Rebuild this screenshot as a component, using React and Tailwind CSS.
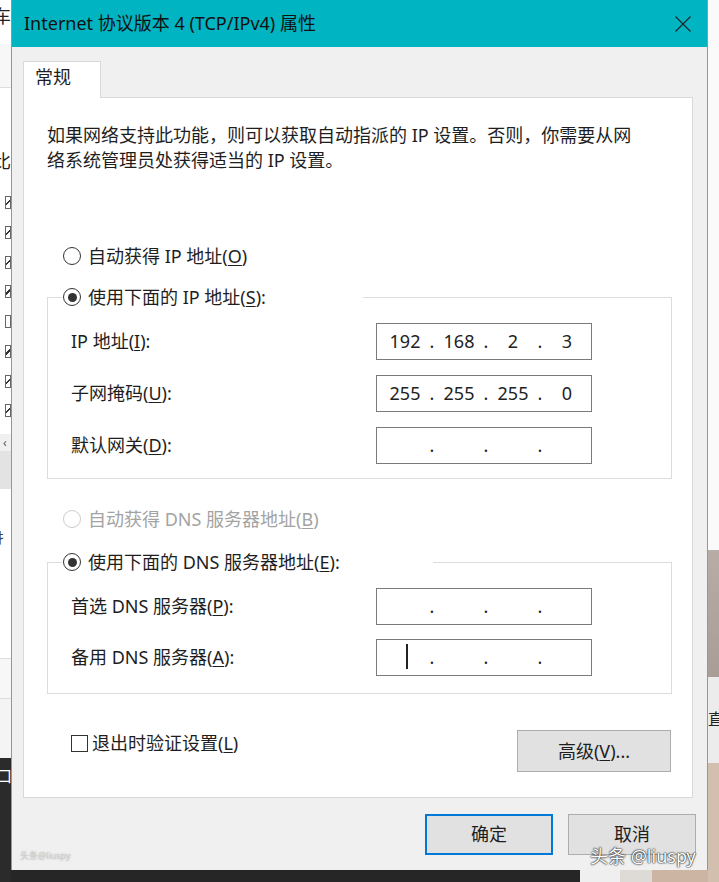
import React from "react";

function Radio({ checked, disabled }) {
  return (
    <span
      className={`flex h-[18px] w-[18px] shrink-0 items-center justify-center rounded-full border bg-white ${
        disabled ? "border-[#cccccc]" : "border-[#333333]"
      }`}
    >
      {checked && <span className="h-[9px] w-[9px] rounded-full bg-[#333333]" />}
    </span>
  );
}

function IpField({ parts = ["", "", "", ""], cursor = false }) {
  return (
    <div className="relative flex h-[37px] w-[216px] items-center border border-[#7a7a7a] bg-white pl-[4px] text-[18px] text-[#222]">
      {parts.map((p, i) => (
        <React.Fragment key={i}>
          <span className="w-[48px] text-center">{p}</span>
          {i < 3 && <span className="w-[6px] text-center">.</span>}
        </React.Fragment>
      ))}
      {cursor && <span className="absolute left-[29px] top-[4px] h-[25px] w-[2px] bg-[#222]" />}
    </div>
  );
}

function FieldRow({ label, keyChar, after = "):", parts, cursor }) {
  return (
    <div className="flex h-[37px] items-center">
      <span className="w-[305px]">
        {label}(<u className="underline-offset-2">{keyChar}</u>{after}
      </span>
      <IpField parts={parts} cursor={cursor} />
    </div>
  );
}

function LeftStrip() {
  const boxes = [203, 236, 267, 297, 329, 361, 393, 424];
  return (
    <div className="flex h-[882px] w-[11px] shrink-0 flex-col overflow-hidden bg-white">
      <div className="h-[44px] overflow-hidden">
        <span className="-ml-[7px] block pt-[5px] text-[18px] leading-[22px] text-[#222]">车</span>
      </div>
      <div className="h-[44px] border-b border-[#dddddd] bg-[#f7f7f7]" />
      <div className="h-[102px] overflow-hidden">
        <span className="-ml-[7px] block pt-[62px] text-[18px] leading-[22px] text-[#222]">比</span>
      </div>
      <div className="flex h-[245px] flex-col pt-[7px]">
        {boxes.map((b, i) => (
          <div key={b} className="flex h-[31.5px] items-start">
            <span
              className={`ml-[5px] h-[13px] w-[8px] border border-[#666] ${
                i === 4 ? "bg-white" : "bg-[linear-gradient(135deg,transparent_45%,#333_45%,#333_60%,transparent_60%)]"
              }`}
            />
          </div>
        ))}
      </div>
      <div className="flex h-[17px] items-center bg-[#f0f0f0] pl-[3px] text-[12px] leading-none text-[#555]">‹</div>
      <div className="h-[38px] bg-[#e3e3e3]" />
      <div className="h-[170px] overflow-hidden">
        <span className="-ml-[4px] block pt-[40px] text-[14px] leading-[18px] text-[#444]">扌</span>
      </div>
      <div className="h-[40px] border-t border-[#dddddd] bg-[#f7f7f7]" />
      <div className="h-[60px] border-t border-[#dddddd] bg-[#f4f4f4]" />
      <div className="h-[125px] overflow-hidden bg-[#2b2b2b]">
        <span className="-ml-[4px] block pt-[8px] text-[16px] leading-[20px] text-white">口</span>
      </div>
    </div>
  );
}

function RightStrip() {
  return (
    <div className="flex h-[882px] w-[11px] shrink-0 flex-col overflow-hidden">
      <div className="h-[550px] bg-[#fafafa]" />
      <div className="h-[127px] bg-[linear-gradient(180deg,#b7aca6,#a99d97)]" />
      <div className="h-[86px] overflow-hidden bg-[#ececec]">
        <span className="block pt-[32px] text-[16px] leading-[20px] text-[#222]">直</span>
      </div>
      <div className="flex-1 bg-[#d3bfae]" />
    </div>
  );
}

export default function App() {
  return (
    <div className="relative flex h-[882px] w-[719px] overflow-hidden font-['Noto_Sans','Noto_Sans_CJK_SC',sans-serif] text-[18px] text-[#1e1e1e]">
      <LeftStrip />

      <div className="flex w-[697px] shrink-0 flex-col">
        {/* dialog */}
        <div className="flex h-[870px] flex-col border-x border-[#4fb3bd] bg-[#f0f0f0]">
          <div className="flex h-[47px] shrink-0 items-center justify-between bg-[#00b4c2] pl-[12px] pr-[16px]">
            <span className="text-[18px] text-[#111]">Internet 协议版本 4 (TCP/IPv4) 属性</span>
            <svg width="16" height="16" viewBox="0 0 16 16">
              <path d="M0.5 0.5 L15.5 15.5 M15.5 0.5 L0.5 15.5" stroke="#222" strokeWidth="1.1" fill="none" />
            </svg>
          </div>

          <div className="pl-[11px] pt-[14px]">
            <div className="relative z-10 -mb-px flex h-[37px] w-[78px] items-center border border-b-0 border-[#d9d9d9] bg-white pb-[5px] pl-[11px] text-[18px]">
              常规
            </div>
            <div className="flex h-[701px] w-[670px] flex-col border border-[#d9d9d9] bg-white">
              <p className="pl-[23px] pt-[25px] leading-[25px]">
                如果网络支持此功能，则可以获取自动指派的 IP 设置。否则，你需要从网
                <br />
                络系统管理员处获得适当的 IP 设置。
              </p>

              <div className="mt-[71px] flex h-[24px] items-center gap-[7px] pl-[39px]">
                <Radio />
                <span>
                  自动获得 IP 地址(<u className="underline-offset-2">O</u>)
                </span>
              </div>

              <fieldset className="ml-[23px] mt-[17px] w-[625px] border border-[#dcdcdc]">
                <legend className="ml-[14px] flex h-[24px] w-[301px] items-center gap-[7px] pl-[1px]">
                  <Radio checked />
                  <span>
                    使用下面的 IP 地址(<u className="underline-offset-2">S</u>):
                  </span>
                </legend>
                <div className="flex flex-col gap-[15px] pb-[14px] pl-[23px] pt-[14px]">
                  <FieldRow label="IP 地址" keyChar="I" parts={["192", "168", "2", "3"]} />
                  <FieldRow label="子网掩码" keyChar="U" parts={["255", "255", "255", "0"]} />
                  <FieldRow label="默认网关" keyChar="D" />
                </div>
              </fieldset>

              <div className="mt-[28px] flex h-[24px] items-center gap-[7px] pl-[39px] text-[#a3a3a3]">
                <Radio disabled />
                <span>
                  自动获得 DNS 服务器地址(<u className="underline-offset-2">B</u>)
                </span>
              </div>

              <fieldset className="ml-[23px] mt-[19px] w-[625px] border border-[#dcdcdc]">
                <legend className="ml-[14px] flex h-[24px] w-[371px] items-center gap-[7px] pl-[1px]">
                  <Radio checked />
                  <span>
                    使用下面的 DNS 服务器地址(<u className="underline-offset-2">E</u>):
                  </span>
                </legend>
                <div className="flex flex-col gap-[14px] pb-[17px] pl-[23px] pt-[14px]">
                  <FieldRow label="首选 DNS 服务器" keyChar="P" />
                  <FieldRow label="备用 DNS 服务器" keyChar="A" cursor />
                </div>
              </fieldset>

              <div className="mt-[36px] flex items-start justify-between pl-[47px] pr-[21px]">
                <div className="mt-[4px] flex h-[18px] items-center gap-[4px]">
                  <span className="h-[17px] w-[17px] border border-[#333] bg-white" />
                  <span>
                    退出时验证设置(<u className="underline-offset-2">L</u>)
                  </span>
                </div>
                <button className="h-[42px] w-[154px] border border-[#adadad] bg-[#e1e1e1] text-[18px]">
                  高级(<u className="underline-offset-2">V</u>)...
                </button>
              </div>
            </div>
          </div>

          <div className="mt-[16px] flex justify-end gap-[15px] pr-[11px]">
            <button className="h-[41px] w-[128px] border-2 border-[#0078d7] bg-[#e1e1e1] text-[18px]">确定</button>
            <button className="h-[41px] w-[128px] border border-[#adadad] bg-[#e1e1e1] text-[18px]">取消</button>
          </div>
        </div>

        <div className="flex h-[12px]">
          <div className="w-[569px] bg-[#262626]" />
          <div className="w-[40px] bg-[#efefef]" />
          <div className="w-[32px] bg-[#dedad6]" />
          <div className="flex-1 bg-[#cdb5a3]" />
        </div>
      </div>

      <RightStrip />

      <span className="absolute left-[20px] top-[849px] text-[9px] text-[#cfcfcf] [text-shadow:0_0_2px_#bbb]">头条@liuspy</span>
      <span className="absolute left-[590px] top-[843px] text-[18px] leading-[26px] text-white [text-shadow:0_0_2px_#000,0_0_1px_#000]">
        头条 @liuspy
      </span>
    </div>
  );
}
